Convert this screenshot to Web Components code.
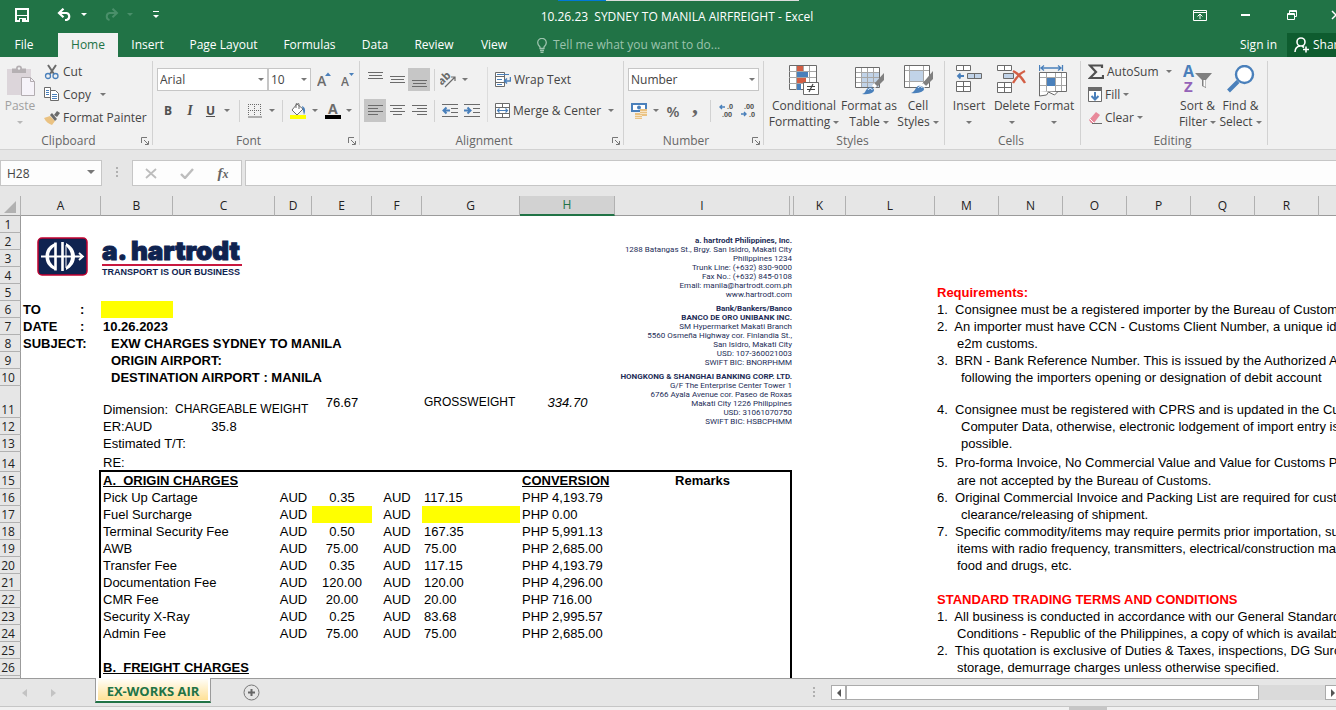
<!DOCTYPE html>
<html lang="en">
<head>
<meta charset="utf-8">
<title>10.26.23 SYDNEY TO MANILA AIRFREIGHT - Excel</title>
<style>
  html, body { margin: 0; height: 100%; overflow: hidden; }
  body { font: 12px/16px "Open Sans", "Noto Sans", sans-serif; color: #444; background: #e6e6e6; }
</style>
</head>
<body>
<xl-app></xl-app>
<script>
const BASE = `
  *, *::before, *::after { box-sizing: border-box; }
  button { border: 0; padding: 0; margin: 0; background: none; font: inherit; color: inherit; text-align: center; }
  a { color: inherit; text-decoration: none; }
  svg { display: block; }
`;

function define(name, html, setup) {
  const tpl = document.createElement('template');
  tpl.innerHTML = html;
  customElements.define(name, class extends HTMLElement {
    constructor() {
      super();
      this.attachShadow({ mode: 'open' }).append(tpl.content.cloneNode(true));
    }
    connectedCallback() { if (setup) setup.call(this, this.shadowRoot); }
  });
}

/* ---------- icon set: [width, height, markup] ---------- */
const G = '#6b6b6b', B = '#4a80bb';
const lines = (rows) => rows.map(([x1, x2, y]) => `<path d="M${x1} ${y}.5H${x2}" stroke="${G}"/>`).join('');
const ICONS = {
  save: [14, 14, '<path d="M1 1h12v12H1z" fill="none" stroke="#fff" stroke-width="2"/><path d="M2 7h10v1H2zM4 10h7v4H4z" fill="#fff"/><path d="M5 11h2v3H5z" fill="#217346"/>'],
  undo: [16, 13, '<path d="M2 5h7.500a3.600 3.600 0 0 1 0 7H8M6.500 .7 2 5l4.500 4.300" fill="none" stroke="#fff" stroke-width="2.200"/>'],
  redo: [16, 13, '<path d="M14 5H6.500a3.600 3.600 0 0 0 0 7M9.500 .7 14 5 9.500 9.300" fill="none" stroke="#4a8f6a" stroke-width="2"/>'],
  qat: [6, 8, '<path d="M0 .5h6" stroke="#fff"/><path d="M0 4h6L3 7z" fill="#fff"/>'],
  ribbonopt: [14, 11, '<path d="M.5.500h13v10H.5zM.5 2.500h13M7 9V5M4.500 6.500 7 4l2.500 2.500" fill="none" stroke="#fff"/>'],
  minimize: [14, 3, '<path d="M2 0h9v2H2z" fill="#fff"/>'],
  restore: [14, 11, '<path d="M2.500 3.500h7v6h-7zM4.500 3.500v-3h7v6h-2" fill="none" stroke="#fff"/><path d="M3 4.500h6M5 1.500h6" stroke="#fff"/>'],
  close: [10, 10, '<path d="M1 1l8 8M9 1 1 9" stroke="#fff" stroke-width="1.500"/>'],
  bulb: [10, 15, '<path d="M3 10.500V9C1.500 7.500.700 6.500.700 4.700a4.300 4.300 0 0 1 8.600 0C9.300 6.500 8.500 7.500 7 9v1.500zM3 12.500h4M3.500 14.300h3" fill="none" stroke="#9cc3ad" stroke-width="1.300"/>'],
  person: [16, 16, '<circle cx="7" cy="5" r="4" fill="none" stroke="#fff" stroke-width="1.600"/><path d="M1 15c0-3.500 2-5.500 5-6M8 9l2 1.500M12 9.500v6M9 12.500h6" fill="none" stroke="#fff" stroke-width="1.600"/>'],
  paste: [30, 32, '<path d="M2 4h24v26H2z" fill="#dcd5da"/><path d="M7 3.500h4a3 3 0 0 1 6 0h4V8H7z" fill="#b5b0b3"/><circle cx="14" cy="3.500" r="1.200" fill="#f1f1f1"/><path d="M16.500 12.500h9l4 4v14h-13z" fill="#f6f3f9" stroke="#b3adb1"/><path d="M25.500 12.500v4h4" fill="none" stroke="#b3adb1"/>'],
  cut: [16, 16, `<path d="M4 1l6 9M12 1 6 10" stroke="${G}" stroke-width="2"/><circle cx="4" cy="12" r="2.500" fill="none" stroke="${B}" stroke-width="1.300"/><circle cx="11.500" cy="12" r="2.500" fill="none" stroke="${B}" stroke-width="1.300"/>`],
  copy: [16, 15, `<path d="M.5.500h6v10h-6z" fill="#fff" stroke="${G}"/><path d="M2 3.500h3M2 5.500h3M2 7.500h3" stroke="${B}"/><path d="M6.500 3.500h5l3 3v7h-8z" fill="#fff" stroke="${G}"/><path d="M8 7.500h5M8 9.500h5M8 11.500h5" stroke="${B}"/>`],
  painter: [16, 14, `<path d="M0 7l6-2 5 5-3 4c-3-1-6-3-8-7z" fill="#eac282"/><path d="M6 4l5 6 2-2-5-6z" fill="${G}"/><path d="M10 4l3-4 3 2-3 4z" fill="${G}"/>`],
  grow: [14, 15, `<text x="0" y="14" font-size="14" fill="${G}" font-weight="600">A</text><path d="M8 4h6l-3-3.500z" fill="${B}"/>`],
  shrink: [14, 15, `<text x="0" y="14" font-size="12" fill="${G}" font-weight="600">A</text><path d="M8 1h5l-2.500 3z" fill="${B}"/>`],
  borders: [14, 14, `<path d="M0 .5h14M0 6.500h14M.5 0v12M6.500 0v12M12.500 0v12" stroke="${G}" stroke-dasharray="1 1"/><path d="M0 13h14" stroke="${G}"/>`],
  fill: [17, 16, `<path d="M7 1 13 6l-6 6-5-5z" fill="#fff" stroke="${G}"/><path d="M6 5V1.500a1.500 1.500 0 0 1 3 0V6" fill="none" stroke="${G}"/><path d="M12 3c3 1 4 4 2 9z" fill="${B}"/><path d="M0 12h16v4H0z" fill="#ff0"/>`],
  fontcolor: [16, 16, `<text x="3" y="11" font-size="14" font-weight="700" fill="${G}">A</text><path d="M0 12h16v4H0z" fill="#000"/>`],
  vtop: [15, 15, lines([[0, 15, 0], [1, 14, 3], [0, 15, 6]])],
  vmid: [15, 15, lines([[0, 15, 4], [1, 14, 7], [0, 15, 10]])],
  vbot: [15, 15, lines([[0, 15, 8], [1, 14, 11], [0, 15, 14]])],
  left: [15, 12, lines([[0, 15, 0], [0, 10, 3], [0, 15, 6], [0, 10, 9]])],
  center: [15, 12, lines([[0, 15, 0], [3, 12, 3], [0, 15, 6], [3, 12, 9]])],
  right: [15, 12, lines([[0, 15, 0], [5, 15, 3], [0, 15, 6], [5, 15, 9]])],
  orient: [17, 16, `<g transform="rotate(-45 6 8)"><text x="-1" y="9" font-size="11" font-weight="700" fill="${G}">ab</text></g><path d="M5 15 15 5M11 5h4v4" fill="none" stroke="${G}" stroke-width="1.200"/>`],
  outdent: [16, 14, lines([[0, 16, 0], [9, 16, 4], [9, 16, 8], [0, 16, 12]]) + `<path d="M8 6.500H2M4.500 3.500l-3 3 3 3" fill="none" stroke="${B}" stroke-width="2"/>`],
  indent: [16, 14, lines([[0, 16, 0], [9, 16, 4], [9, 16, 8], [0, 16, 12]]) + `<path d="M0 6.500h6M3.500 3.500l3 3-3 3" fill="none" stroke="${B}" stroke-width="2"/>`],
  wrap: [16, 16, `<path d="M.5.500h9v14h-9zM.5 4.500h9M.5 10.500h9" fill="#fff" stroke="${G}"/><path d="M2 2.500h12M2 7.500h5M2 12.500h5" stroke="${B}"/><path d="M15.500 5v4H10M12 6.500 9.500 9 12 11.500" fill="none" stroke="${B}" stroke-width="1.500"/>`],
  merge: [15, 15, `<path d="M.5.500h14v14H.5zM.5 4.500h14M.5 10.500h14M7.500.500v4M7.500 10.500v4" fill="#fff" stroke="${G}"/><path d="M2 7.500h11M4.500 5.500l-2 2 2 2M10.500 5.500l2 2-2 2" fill="none" stroke="${B}" stroke-width="1.200"/>`],
  currency: [17, 16, `<path d="M1 1h14v7H1z" fill="#fff" stroke="${B}" stroke-width="2"/><circle cx="8" cy="4.500" r="2" fill="${B}"/><path d="M9 6h7v7H9zM4 10h7v6H4z" fill="#eac282"/><path d="M9 8.500h7M9 10.500h7M4 12.500h7M4 14.500h7" stroke="#f6e3c4"/>`],
  decinc: [15, 15, `<text x="8" y="6" font-size="7" font-weight="700" fill="#555">.0</text><text x="3" y="14" font-size="7" font-weight="700" fill="#555">.00</text><path d="M6 4H1M3 2 1 4l2 2" fill="none" stroke="${B}" stroke-width="1.400"/>`],
  decdec: [15, 15, `<text x="3" y="6" font-size="7" font-weight="700" fill="#555">.00</text><text x="8" y="14" font-size="7" font-weight="700" fill="#555">.0</text><path d="M0 11h5M3 9l2 2-2 2" fill="none" stroke="${B}" stroke-width="1.400"/>`],
  cond: [30, 30, `<path d="M.5.500h27v24H.5z" fill="#fff" stroke="${G}"/><path d="M0 6.500h27M0 12.500h27M0 18.500h27M7.500 1v24M14.500 1v24M20.500 1v24" stroke="#a6a6a6"/><path d="M8 1h6v5H8z" fill="#d35f45"/><path d="M8 7h11v5H8z" fill="${B}"/><path d="M8 13h9v5H8z" fill="#d35f45"/><path d="M8 19h4v6H8z" fill="${B}"/><path d="M14.500 17.500h15v12h-15z" fill="#fff" stroke="${G}"/><path d="M18 21.500h8M18 24.500h8M24 19l-4 8" stroke="#444" stroke-width="1.200"/>`],
  table: [30, 30, `<path d="M1.500 2.500h24v20h-24z" fill="#fff" stroke="${G}"/><path d="M8 8h17v14H8z" fill="#c1d3e8"/><path d="M2 7.500h23M2 12.500h23M2 17.500h23M7.500 3v19M13.500 3v19M19.500 3v19" stroke="#a6a6a6"/><path d="M30 8v7l-7 7-3-3z" fill="#808080"/><path d="M20 18l3 3-2 2-3-2z" fill="#fff"/><path d="M8 29c4-1 3-4 6-6 3-2 6 0 6 2s-3 5-12 4z" fill="${B}"/><path d="M14 25c1-2 4-2 4 0" stroke="#fff" fill="none"/>`],
  cell: [30, 30, `<path d="M1.500.500h25v22h-25z" fill="#fff" stroke="${G}"/><path d="M7 6h13v10H7z" fill="#c1d3e8"/><path d="M2 5.500h24M2 16.500h24M6.500 1v21M20.500 1v21" stroke="#a6a6a6"/><path d="M30 6v8l-7 7-4-2z" fill="#808080"/><path d="M20 18l3 3-2 2-3-2z" fill="#fff"/><path d="M8 28c4-1 4-5 7-7 3-1 6 1 6 3s-4 5-13 4z" fill="${B}"/><path d="M15 23c1-2 4-2 4 0" stroke="#fff" fill="none"/>`],
  insert: [26, 30, `<path d="M.5.500h14v5H.5zM7.500.500v5M.5 16.500h14v10H.5zM.5 21.500h14M7.500 16.500v10" fill="#fff" stroke="${G}"/><path d="M11.500 8.500h14v5h-14zM18.500 8.500v5" fill="#c1d3e8" stroke="${G}"/><path d="M8 11H2M4.500 8.500 2 11l2.500 2.500" fill="none" stroke="${B}" stroke-width="1.800"/>`],
  delete: [30, 30, `<path d="M.5.500h14v5H.5zM7.500.500v5M.5 17.500h14v10H.5zM.5 22.500h14M7.500 17.500v10" fill="#fff" stroke="${G}"/><path d="M6.500 8.500h10v5h-10z" fill="#c1d3e8" stroke="${G}"/><path d="M16 6c4 2 9 7 12 12M28 6c-5 2-9 7-12 12" stroke="#d35f45" stroke-width="2.400" fill="none"/>`],
  format: [30, 32, `<path d="M.5 0v6M23.500 0v6M2 3h20M5 .5 2 3l3 2.500M19 .5 22 3l-3 2.500" fill="none" stroke="${B}" stroke-width="1.300"/><path d="M.5 7.500h27v19H.5z" fill="#fff" stroke="${G}"/><path d="M1 12.500h26M1 20.500h26M7.500 8v18M16.500 8v18M22.500 8v18" stroke="#a6a6a6"/><path d="M8 13h8v8H8z" fill="${B}"/><path d="M.5 26v5l7-1 2-3 6 3 3-3" fill="#fff" stroke="${G}"/>`],
  sum: [16, 16, `<path d="M14 4V1.500H2l6 6.500-6 6h13V11" fill="none" stroke="#505050" stroke-width="2.200"/>`],
  filldown: [14, 15, `<path d="M.5.500h13v14H.5z" fill="#fff" stroke="${G}"/><path d="M0 0h14v4H0z" fill="${G}"/><path d="M7 5v7M3.500 9 7 12.500 10.500 9" fill="none" stroke="${B}" stroke-width="2"/>`],
  clear: [14, 14, `<path d="M1 9 8 1l4 3-6 8H3z" fill="#e8899a"/><path d="M2 8l4 4" stroke="#fff"/><path d="M4 12.500h10" stroke="${G}"/>`],
  sort: [30, 28, `<text x="0" y="12" font-size="16" font-weight="700" fill="${B}">A</text><text x="1" y="27" font-size="15" font-weight="700" fill="#9463b8">Z</text><path d="M12 8h17l-6 7v8l-4-2v-6z" fill="#808080"/><path d="M20.500 15h2v7l-2-1z" fill="#fff"/>`],
  find: [28, 28, `<circle cx="17.500" cy="9.500" r="8.500" fill="#fff" stroke="${B}" stroke-width="2.400"/><path d="M1.500 26 11 16.500" stroke="${B}" stroke-width="4"/>`],
  launch: [8, 8, `<path d="M.5 6V.5H6M3 3l4 4M7.500 4v3.500H4" fill="none" stroke="#777"/>`],
  x: [12, 11, '<path d="M1 1l10 9M11 1 1 10" stroke="#bdbdbd" stroke-width="1.800"/>'],
  check: [14, 11, '<path d="M1 6l4 4 8-9" fill="none" stroke="#bdbdbd" stroke-width="2.400"/>'],
  dots: [3, 12, '<path d="M0 0h2v2H0zM0 4h2v2H0zM0 8h2v2H0z" fill="#b0b0b0"/>'],
  prev: [5, 8, '<path d="M5 0v8L0 4z" fill="#c3c3c3"/>'],
  next: [5, 8, '<path d="M0 0v8l5-4z" fill="#c3c3c3"/>'],
  sleft: [4, 8, '<path d="M4 0v8L0 4z" fill="#555"/>'],
  sright: [4, 8, '<path d="M0 0v8l4-4z" fill="#555"/>'],
  plus: [17, 17, '<circle cx="8.500" cy="8.500" r="7.500" fill="none" stroke="#777"/><path d="M8.500 5v7M5 8.500h7" stroke="#666" stroke-width="2"/>'],
  corner: [12, 12, '<path d="M12 0v12H0z" fill="#b1b1b1"/>'],
  arrow: [6, 3, '<path d="M0 0h6L3 3z" fill="currentColor"/>'],
  bigarrow: [8, 4, '<path d="M0 0h8L4 4z" fill="currentColor"/>'],
};
class XlIcon extends HTMLElement {
  constructor() { super(); this.attachShadow({ mode: 'open' }); }
  connectedCallback() {
    const [w, h, body] = ICONS[this.getAttribute('name')];
    this.shadowRoot.innerHTML = `<style>:host{display:block;flex:none}svg{display:block}</style>
      <svg width="${w}" height="${h}" viewBox="0 0 ${w} ${h}" aria-hidden="true" font-family="Open Sans, sans-serif">${body}</svg>`;
  }
}
customElements.define('xl-icon', XlIcon);
const icon = (n) => `<xl-icon name="${n}"></xl-icon>`;

/* ---------- title bar ---------- */
define('xl-titlebar', `<style>${BASE}
  :host { display: flex; height: 33px; background: #217346; color: #fff; position: relative; }
  .quick { width: 164px; display: flex; align-items: center; padding: 0 0 4px 15px; }
  .quick button:nth-child(1) { margin-right: 28px; }
  .quick button:nth-child(2), .quick button:nth-child(4) { margin-right: 8px; }
  .quick button:nth-child(3) { margin-right: 16px; }
  .quick button:nth-child(5) { margin-right: 20px; }
  .quick button:nth-child(5) { color: #4a8f6a; }
  h1 { flex: 1; margin: 0; font: inherit; line-height: 33px; text-align: center; white-space: pre; }
  .win { width: 146px; overflow: hidden; display: flex; align-items: center; padding: 0 0 3px 3px; }
  .win button { flex: none; width: 46px; }
  .strip { position: absolute; top: 0; left: 558px; width: 241px; height: 1px; background: linear-gradient(90deg, #0078d7 48px, #ddd 48px); }
</style>
<div class="quick">
  <button aria-label="Save">${icon('save')}</button>
  <button aria-label="Undo">${icon('undo')}</button><button aria-label="Undo history">${icon('arrow')}</button>
  <button aria-label="Redo">${icon('redo')}</button><button aria-label="Redo history">${icon('arrow')}</button>
  <button aria-label="Customize toolbar">${icon('qat')}</button>
</div>
<h1>10.26.23  SYDNEY TO MANILA AIRFREIGHT - Excel</h1>
<div class="win">
  <button aria-label="Ribbon display">${icon('ribbonopt')}</button><button aria-label="Minimize">${icon('minimize')}</button>
  <button aria-label="Restore">${icon('restore')}</button><button aria-label="Close">${icon('close')}</button>
</div><div class="strip"></div>`);

/* ---------- ribbon tabs ---------- */
define('xl-tabs', `<style>${BASE}
  :host { display: flex; height: 24px; background: #217346; color: #fff; line-height: 24px; white-space: nowrap; }
  nav { display: grid; grid-template-columns: 48px 10px 60px 59px 93px 79px 52px 66px 54px; }
  nav a { text-align: center; }
  nav a.on { background: #f1f1f1; color: #217346; }
  .tell { display: flex; align-items: center; gap: 6px; margin-left: 16px; color: #9cc3ad; }
  .sign { margin-left: auto; padding-right: 10px; }
  .share { width: 49px; overflow: hidden; background: #0e5c2f; display: flex; align-items: center; gap: 3px; padding-left: 7px; }
</style>
<nav aria-label="Ribbon">
  <a href="#file">File</a><span></span><a href="#home" class="on">Home</a><a href="#insert">Insert</a><a href="#layout">Page Layout</a>
  <a href="#formulas">Formulas</a><a href="#data">Data</a><a href="#review">Review</a><a href="#view">View</a>
</nav>
<button class="tell">${icon('bulb')}<span>Tell me what you want to do...</span></button>
<a class="sign" href="#signin">Sign in</a>
<button class="share">${icon('person')}<span>Share</span></button>`);

/* ---------- ribbon building blocks ---------- */
define('xl-group', `<style>${BASE}
  :host { display: flex; flex-direction: column; flex: none; position: relative; height: 92px; }
  :host::after { content: ""; position: absolute; right: 0; top: 4px; bottom: 4px; width: 1px; background: #d2d2d2; }
  .body { flex: 1; display: flex; min-height: 0; }
  footer { height: 17px; display: flex; align-items: center; color: #666; }
  footer span { flex: 1; text-align: center; padding-right: 4px; line-height: 16px; }
  footer button { width: 12px; }
</style>
<div class="body"><slot></slot></div><footer><span></span></footer>`, function (root) {
  root.querySelector('span').textContent = this.getAttribute('label');
  if (this.hasAttribute('launch')) {
    const b = document.createElement('button');
    b.setAttribute('aria-label', this.getAttribute('label') + ' settings');
    b.innerHTML = icon('launch');
    root.querySelector('footer').append(b);
  }
});

/* Small button: icon, optional slotted text, optional drop arrow */
define('xl-tool', `<style>${BASE}
  :host { display: block; flex: none; height: 23px; }
  button { width: 100%; height: 100%; display: flex; align-items: center; justify-content: var(--just, center); gap: 3px; white-space: nowrap; }
  :host([on]) button { background: #c6c6c6; }
  .arrow { color: #777; margin-left: var(--drop, 2px); }
</style><button></button>`, function (root) {
  const b = root.querySelector('button'), i = this.getAttribute('icon');
  b.innerHTML = (i ? icon(i) : '') + '<slot></slot>' + (this.hasAttribute('drop') ? '<xl-icon class="arrow" name="arrow"></xl-icon>' : '');
  if (this.getAttribute('aria-label')) b.setAttribute('aria-label', this.getAttribute('aria-label'));
});

/* Tall button: icon over one or two text lines */
define('xl-big', `<style>${BASE}
  :host { display: block; flex: none; padding-top: 8px; }
  button { width: 100%; display: flex; flex-direction: column; align-items: center; white-space: nowrap; }
  .pic { height: 33px; }
  .two { display: flex; align-items: center; gap: 3px; height: 16px; }
  .arrow { color: var(--arrow, #777); }
</style><button><span class="pic"></span><span class="one"><slot></slot></span><span class="two"><slot name="second"></slot><xl-icon class="arrow" name="arrow"></xl-icon></span></button>`,
  function (root) { root.querySelector('.pic').innerHTML = icon(this.getAttribute('icon')); });

define('xl-select', `<style>${BASE}
  :host { display: block; position: relative; flex: none; height: 23px; }
  select { appearance: none; width: 100%; height: 100%; border: 1px solid #c6c6c6; border-radius: 0; background: #fff; font: inherit; color: #444; padding: 0 0 0 2px; }
  xl-icon { position: absolute; right: 4px; top: 10px; color: #777; }
</style><select><option></option></select>${icon('arrow')}`, function (root) {
  root.querySelector('option').textContent = this.getAttribute('value');
  root.querySelector('select').setAttribute('aria-label', this.getAttribute('label'));
});

/* ---------- ribbon ---------- */
define('xl-ribbon', `<style>${BASE}
  :host { display: flex; height: 93px; background: #f1f1f1; border-bottom: 1px solid #d2d2d2; overflow: hidden; }
  .row { display: flex; align-items: center; height: 23px; }
  .rows { display: flex; flex-direction: column; gap: 8px; padding-top: 11px; }
  .list { display: flex; flex-direction: column; padding-top: 3px; --just: flex-start; }
  .sep { width: 1px; height: 22px; background: #d2d2d2; flex: none; }
  .tall { width: 1px; height: 55px; margin-top: 10px; background: #dcdcdc; }
  .w22 { width: 22px; } .w30 { width: 30px; }
  b, i, u { font-size: 12px; font-weight: 700; color: #505050; }
  i { font-family: "Liberation Serif", serif; font-size: 14px; }
  .pc { font-size: 15px; font-weight: 600; color: #606060; }
  .comma { font: 700 24px/12px "Liberation Serif", serif; color: #666; padding-bottom: 12px; }
  .off { color: #a0a0a0; --arrow: #b8b8b8; }
</style>
<xl-group label="Clipboard" launch style="width:153px">
  <xl-big class="off" icon="paste" style="width:40px">Paste</xl-big>
  <div class="list" style="padding-left:4px">
    <xl-tool icon="cut">Cut</xl-tool>
    <xl-tool icon="copy" drop style="--drop:6px">Copy</xl-tool>
    <xl-tool icon="painter">Format Painter</xl-tool>
  </div>
</xl-group>
<xl-group label="Font" launch style="width:207px">
  <div class="rows" style="padding-left:4px">
    <div class="row"><xl-select label="Font" value="Arial" style="width:111px"></xl-select><xl-select label="Font size" value="10" style="width:43px"></xl-select>
      <xl-tool icon="grow" aria-label="Increase font size" style="width:26px"></xl-tool><xl-tool class="w22" icon="shrink" aria-label="Decrease font size"></xl-tool></div>
    <div class="row"><xl-tool class="w22"><b>B</b></xl-tool><xl-tool class="w22"><i>I</i></xl-tool><xl-tool drop style="--drop:6px;width:34px"><u>U</u></xl-tool><span class="sep" style="margin:0 4px"></span>
      <xl-tool icon="borders" drop aria-label="Borders" style="--drop:4px;width:34px"></xl-tool><span class="sep" style="margin:0 4px"></span>
      <xl-tool icon="fill" drop aria-label="Fill color" style="width:34px"></xl-tool><xl-tool icon="fontcolor" drop aria-label="Font color" style="width:34px"></xl-tool></div>
  </div>
</xl-group>
<xl-group label="Alignment" launch style="width:264px">
  <div class="rows" style="padding-left:4px;width:127px">
    <div class="row"><xl-tool class="w22" icon="vtop" aria-label="Top align"></xl-tool><xl-tool class="w22" icon="vmid" aria-label="Middle align"></xl-tool><xl-tool class="w22" icon="vbot" on aria-label="Bottom align"></xl-tool><span class="sep" style="margin:0 4px"></span><xl-tool class="w30" icon="orient" drop aria-label="Orientation"></xl-tool></div>
    <div class="row"><xl-tool class="w22" icon="left" on aria-label="Align left"></xl-tool><xl-tool class="w22" icon="center" aria-label="Center"></xl-tool><xl-tool class="w22" icon="right" aria-label="Align right"></xl-tool><span class="sep" style="margin:0 4px"></span><xl-tool class="w22" icon="outdent" aria-label="Decrease indent"></xl-tool><xl-tool class="w22" icon="indent" aria-label="Increase indent"></xl-tool></div>
  </div>
  <span class="tall"></span>
  <div class="rows" style="padding-left:7px;--just:flex-start">
    <xl-tool icon="wrap">Wrap Text</xl-tool>
    <xl-tool icon="merge" drop style="--drop:4px">Merge &amp; Center</xl-tool>
  </div>
</xl-group>
<xl-group label="Number" launch style="width:140px">
  <div class="rows" style="padding-left:4px">
    <xl-select label="Number format" value="Number" style="width:131px"></xl-select>
    <div class="row"><xl-tool icon="currency" drop aria-label="Accounting format" style="width:34px"></xl-tool><xl-tool class="w22"><span class="pc">%</span></xl-tool><xl-tool class="w22"><span class="comma">,</span></xl-tool><span class="sep" style="margin:0 4px"></span><xl-tool class="w22" icon="decinc" aria-label="Increase decimal"></xl-tool><xl-tool class="w22" icon="decdec" aria-label="Decrease decimal"></xl-tool></div>
  </div>
</xl-group>
<xl-group label="Styles" style="width:181px">
  <xl-big icon="cond" style="width:76px;margin-left:2px">Conditional<span slot="second">Formatting</span></xl-big>
  <xl-big icon="table" style="width:54px">Format as<span slot="second">Table</span></xl-big>
  <xl-big icon="cell" style="width:44px">Cell<span slot="second">Styles</span></xl-big>
</xl-group>
<xl-group label="Cells" style="width:136px">
  <xl-big icon="insert" style="width:44px;margin-left:2px">Insert</xl-big>
  <xl-big icon="delete" style="width:42px">Delete</xl-big>
  <xl-big icon="format" style="width:42px">Format</xl-big>
</xl-group>
<xl-group label="Editing" style="width:187px">
  <div class="list" style="padding-left:7px;width:95px">
    <xl-tool icon="sum" drop style="--drop:4px">AutoSum</xl-tool>
    <xl-tool icon="filldown" drop style="--drop:0px">Fill</xl-tool>
    <xl-tool icon="clear" drop style="--drop:0px">Clear</xl-tool>
  </div>
  <xl-big icon="sort" style="width:43px">Sort &amp;<span slot="second">Filter</span></xl-big>
  <xl-big icon="find" style="width:43px">Find &amp;<span slot="second">Select</span></xl-big>
</xl-group>`);

/* ---------- formula bar ---------- */
define('xl-formula-bar', `<style>${BASE}
  :host { display: flex; height: 46px; padding-top: 10px; background: #e6e6e6; }
  :host > * { height: 26px; }
  .name { position: relative; width: 102px; }
  input { width: 100%; height: 26px; border: 1px solid #c6c6c6; background: #fdfdfd; font: inherit; color: #444; padding: 0 6px; border-radius: 0; }
  .name xl-icon { position: absolute; right: 7px; top: 10px; color: #777; }
  .dots { width: 30px; display: grid; place-items: center; }
  .ops { width: 110px; border: 1px solid #c6c6c6; background: #fdfdfd; display: grid; grid-template-columns: repeat(3, 36px); }
  .ops button { display: grid; place-items: center; }
  .fx { font: italic 700 15px "Liberation Serif", serif; color: #666; }
  .fx small { font-size: 12px; }
  .text { flex: 1; margin-left: 3px; border-right: 0; }
</style>
<div class="name"><input aria-label="Name box" value="H28">${icon('bigarrow')}</div>
<div class="dots">${icon('dots')}</div>
<div class="ops"><button aria-label="Cancel">${icon('x')}</button><button aria-label="Enter">${icon('check')}</button><button class="fx" aria-label="Insert function"><span>f<small>x</small></span></button></div>
<input class="text" aria-label="Formula">`);

/* ---------- letterhead pieces that float over the grid ---------- */
define('hartrodt-logo', `<style>${BASE}
  :host { display: flex; gap: 14px; color: #0f2350; font-family: "Liberation Sans", Arial, sans-serif; }
  .words { width: 140px; }
  .big { font: 900 26px/28px "Inter", sans-serif; height: 27px; white-space: nowrap; -webkit-text-stroke: 1px #0f2350; }
  .rule { height: 2px; background: #c8183f; }
  .small { font-size: 9px; line-height: 13px; font-weight: 700; white-space: nowrap; }
</style>
<svg width="51" height="39" viewBox="0 0 51 39" role="img" aria-label="a. hartrodt">
  <rect x="1" y="1" width="49" height="37" rx="4" fill="#0f2350" stroke="#c2002f" stroke-width="1.500"/>
  <path d="M18 6C11 9 8.500 14 8.500 19.500S11 30 18 33v-3c-4-3-6-6-6-10.500S14 12 18 9z" fill="#fff"/>
  <path d="M29 6c6 3 9 8 9 13.500S35 30 29 33v-3c3-3 5-6 5-10.500S32 12 29 9z" fill="#fff"/>
  <path d="M18.500 5.500v28M25.500 5v29" stroke="#fff" stroke-width="2.600"/>
  <path d="M29 8v23" stroke="#fff"/>
  <path d="M4 19.500h41M42 16l4 3.500-4 3.500" fill="none" stroke="#fff" stroke-width="1.800"/>
</svg>
<div class="words"><div class="big">a. hartrodt</div><div class="rule"></div><div class="small">TRANSPORT IS OUR BUSINESS</div></div>`);

define('hartrodt-address', `<style>${BASE}
  :host { display: grid; grid-auto-rows: 1fr; height: 190px; font: 8px/9px Roboto, "Liberation Sans", Arial, sans-serif; color: #1d2d57; text-align: right; white-space: nowrap; }
</style>
<b>a. hartrodt Philippines, Inc.</b><span>1288 Batangas St., Brgy. San Isidro, Makati City</span><span>Philippines 1234</span><span>Trunk Line: (+632) 830-9000</span><span>Fax No.: (+632) 845-0108</span><span>Email: manila@hartrodt.com.ph</span><span>www.hartrodt.com</span><span></span>
<b>Bank/Bankers/Banco</b><b>BANCO DE ORO UNIBANK INC.</b><span>SM Hypermarket Makati Branch</span><span>5560 Osmeña Highway cor. Finlandia St.,</span><span>San Isidro, Makati City</span><span>USD: 107-360021003</span><span>SWIFT BIC: BNORPHMM</span><span></span>
<b>HONGKONG &amp; SHANGHAI BANKING CORP. LTD.</b><span>G/F The Enterprise Center Tower 1</span><span>6766 Ayala Avenue cor. Paseo de Roxas</span><span>Makati City 1226 Philippines</span><span>USD: 31061070750</span><span>SWIFT BIC: HSBCPHMM</span>`);

/* ---------- worksheet ---------- */
const COLS = [['A', 80], ['B', 72], ['C', 102], ['D', 37], ['E', 60], ['F', 50], ['G', 98], ['H', 95], ['I', 175], ['J', 4],
  ['K', 52], ['L', 89], ['M', 64], ['N', 64], ['O', 64], ['P', 64], ['Q', 64], ['R', 64], ['S', 64]];
const fee = (name, rate, total, php) => ({ B: name, D: ['AUD', 'c'], E: rate ? [rate, 'c'] : ['', 'hi'], F: ['AUD', 'c'], G: total || ['', 'hi'], H: php });
const ROWS = {
  5: { M: ['Requirements:', 'b red'] },
  6: { A: ['<span class="lab">TO</span>:', 'b'], B: ['', 'hi'], M: '1.  Consignee must be a registered importer by the Bureau of Customs' },
  7: { A: ['<span class="lab">DATE</span>:', 'b'], B: ['10.26.2023', 'b'], M: '2.  An importer must have CCN - Customs Client Number, a unique identifier' },
  8: { A: ['SUBJECT:', 'b'], B: ['EXW CHARGES SYDNEY TO MANILA', 'b in8'], M: ['e2m customs.', 'in20'] },
  9: { B: ['ORIGIN AIRPORT:', 'b in8'], M: '3.  BRN - Bank Reference Number. This is issued by the Authorized Agent' },
  10: { B: ['DESTINATION AIRPORT : MANILA', 'b in8'], M: ['following the importers opening or designation of debit account', 'in24'] },
  11: { B: 'Dimension:', C: ['CHARGEABLE WEIGHT', 's'], E: ['76.67', 'c mid'], G: ['GROSSWEIGHT', 's mid'], H: ['<i>334.70</i>', 'c mid'], M: '4.  Consignee must be registered with CPRS and is updated in the Customs' },
  12: { B: 'ER:AUD', C: ['35.8', 'c'], M: ['Computer Data, otherwise, electronic lodgement of import entry is', 'in24'] },
  13: { B: 'Estimated T/T:', M: ['possible.', 'in24'] },
  14: { B: ['RE:', 'mid'], M: ['5.  Pro-forma Invoice, No Commercial Value and Value for Customs Purposes', 'mid'] },
  15: { B: ['<u>A.  ORIGIN CHARGES</u>', 'b'], H: ['<u>CONVERSION</u>', 'b'], I: ['Remarks', 'b c'], M: ['are not accepted by the Bureau of Customs.', 'in20'] },
  16: { ...fee('Pick Up Cartage', '0.35', '117.15', 'PHP 4,193.79'), M: '6.  Original Commercial Invoice and Packing List are required for customs' },
  17: { ...fee('Fuel Surcharge', '', '', 'PHP 0.00'), M: ['clearance/releasing of shipment.', 'in24'] },
  18: { ...fee('Terminal Security Fee', '0.50', '167.35', 'PHP 5,991.13'), M: '7.  Specific commodity/items may require permits prior importation, such' },
  19: { ...fee('AWB', '75.00', '75.00', 'PHP 2,685.00'), M: ['items with radio frequency, transmitters, electrical/construction materials', 'in20'] },
  20: { ...fee('Transfer Fee', '0.35', '117.15', 'PHP 4,193.79'), M: ['food and drugs, etc.', 'in20'] },
  21: fee('Documentation Fee', '120.00', '120.00', 'PHP 4,296.00'),
  22: { ...fee('CMR Fee', '20.00', '20.00', 'PHP 716.00'), M: ['STANDARD TRADING TERMS AND CONDITIONS', 'b red'] },
  23: { ...fee('Security X-Ray', '0.25', '83.68', 'PHP 2,995.57'), M: '1.  All business is conducted in accordance with our General Standard' },
  24: { ...fee('Admin Fee', '75.00', '75.00', 'PHP 2,685.00'), M: ['Conditions - Republic of the Philippines, a copy of which is available', 'in20'] },
  25: { M: '2.  This quotation is exclusive of Duties &amp; Taxes, inspections, DG Surcharge' },
  26: { B: ['<u>B.  FREIGHT CHARGES</u>', 'b'], M: ['storage, demurrage charges unless otherwise specified.', 'in20'] },
};
define('xl-sheet', `<style>${BASE}
  :host { display: block; position: relative; flex: 1; min-height: 0; overflow: hidden; background: #fff; }
  table { border-spacing: 0; table-layout: fixed; width: 1383px; }
  th { padding: 0; font-weight: 400; color: #222; background: #e6e6e6; }
  thead th { height: 20px; border-bottom: 1px solid #9b9b9b; border-right: 1px solid #b1b1b1; line-height: 19px; }
  thead th.sel { background: #d2d2d2; color: #217346; border-bottom: 2px solid #217346; line-height: 18px; }
  thead th:first-child { padding: 3px 0 0 4px; }
  tbody th { height: 17px; padding: 1px 4px 0 0; line-height: 15px; vertical-align: bottom; border-right: 1px solid #9b9b9b; border-bottom: 1px solid #b1b1b1; }
  td { padding: 0 2px; font: 13px/17px "Liberation Sans", Arial, sans-serif; color: #000; white-space: pre; vertical-align: bottom; overflow: visible; }
  .b { font-weight: 700; } .c { text-align: center; } .red { color: #f00; } .hi { background: #ff0; } .mid { vertical-align: middle; }
  .s { font-size: 12px; }
  .in8 { padding-left: 10px; } .in20 { padding-left: 22px; } .in24 { padding-left: 26px; }
  .lab { display: inline-block; width: 57px; }
  .L { box-shadow: -2px 0 #000; } .R { border-left: 2px solid #000; }
  .T { box-shadow: 0 -2px #000; } .T.L { box-shadow: -2px 0 #000, -2px -2px #000, 0 -2px #000; } .T.end { box-shadow: 0 -2px #000, 2px -2px #000; }
  hartrodt-logo { position: absolute; left: 37px; top: 41px; }
  hartrodt-address { position: absolute; left: 612px; top: 40px; width: 180px; }
</style>
<table><colgroup></colgroup><thead><tr></tr></thead><tbody></tbody></table>
<hartrodt-logo></hartrodt-logo><hartrodt-address></hartrodt-address>`, function (root) {
  root.querySelector('colgroup').innerHTML = '<col style="width:21px">' + COLS.map((c) => `<col style="width:${c[1]}px">`).join('');
  root.querySelector('thead tr').innerHTML = `<th aria-label="Select all">${icon('corner')}</th>` +
    COLS.map(([n]) => `<th scope="col"${n === 'H' ? ' class="sel"' : ''}>${n === 'J' ? '' : n}</th>`).join('');
  let html = '';
  for (let r = 1; r <= 26; r++) {
    const h = { 11: 32, 14: 20 }[r] || 17, data = ROWS[r] || {};
    html += `<tr style="height:${h}px"><th scope="row">${r}</th>`;
    for (const [n] of COLS) {
      let [text, cls] = Array.isArray(data[n]) ? data[n] : [data[n] || '', ''];
      if (r >= 15 && n === 'B') cls += ' L';
      if (r >= 15 && n === 'J') cls += ' R';
      if (r === 15 && n > 'A' && n < 'J') cls += n === 'I' ? ' T end' : ' T';
      html += `<td${cls ? ` class="${cls.trim()}"` : ''}>${text}</td>`;
    }
    html += '</tr>';
  }
  html += `<tr style="height:17px"><th></th>${COLS.map(([n]) => `<td${n === 'B' ? ' class="L"' : n === 'J' ? ' class="R"' : ''}></td>`).join('')}</tr>`;
  root.querySelector('tbody').innerHTML = html;
});

/* ---------- sheet tabs and horizontal scroll bar ---------- */
define('xl-sheetbar', `<style>${BASE}
  :host { display: flex; height: 28px; background: #e6e6e6; border-top: 1px solid #9b9b9b; flex: none; }
  .nav { width: 95px; display: flex; align-items: center; gap: 24px; padding-left: 22px; }
  .tab { height: 25px; margin-top: -1px; width: 116px; border: 1px solid #9b9b9b; border-width: 0 1px 0 1px; border-bottom: 2px solid #217346; background: #fff; padding: 1px 2px; }
  .tab a { display: block; height: 21px; line-height: 24px; text-align: center; font-size: 13px; font-weight: 700; color: #217346; background: linear-gradient(#fffdf6, #ffe196); white-space: nowrap; }
  .add { margin-left: 32px; }
  .dots { margin: 8px 15px 0 auto; }
  .scroll { width: 505px; height: 15px; margin-top: 6px; display: flex; background: #dadada; }
  .scroll button { width: 15px; background: #fff; border: 1px solid #ababab; display: grid; place-items: center; flex: none; }
  .thumb { width: 413px; background: #fff; border: 1px solid #ababab; margin-right: auto; }
  .scroll button:last-child { margin-right: -4px; }
</style>
<div class="nav"><button aria-label="Previous sheet">${icon('prev')}</button><button aria-label="Next sheet">${icon('next')}</button></div>
<div class="tab"><a href="#sheet">EX-WORKS AIR</a></div>
<button class="add" aria-label="New sheet">${icon('plus')}</button>
<div class="dots">${icon('dots')}</div>
<div class="scroll"><button aria-label="Scroll left">${icon('sleft')}</button><div class="thumb"></div><button aria-label="Scroll right">${icon('sright')}</button></div>`);

define('xl-status', `<style>${BASE}
  :host { display: block; height: 4px; background: #f1f1f1; border-top: 1px solid #c6c6c6; flex: none; }
  div { width: 38px; height: 3px; margin-left: 80%; background: #c6c6c6; }
</style><div></div>`);

define('xl-app', `<style>${BASE}
  :host { display: flex; flex-direction: column; height: 100vh; overflow: hidden; }
  xl-titlebar, xl-tabs, xl-ribbon, xl-formula-bar { flex: none; }
</style>
<xl-titlebar></xl-titlebar><xl-tabs></xl-tabs><xl-ribbon></xl-ribbon><xl-formula-bar></xl-formula-bar>
<xl-sheet></xl-sheet><xl-sheetbar></xl-sheetbar><xl-status></xl-status>`);
</script>
</body>
</html>
